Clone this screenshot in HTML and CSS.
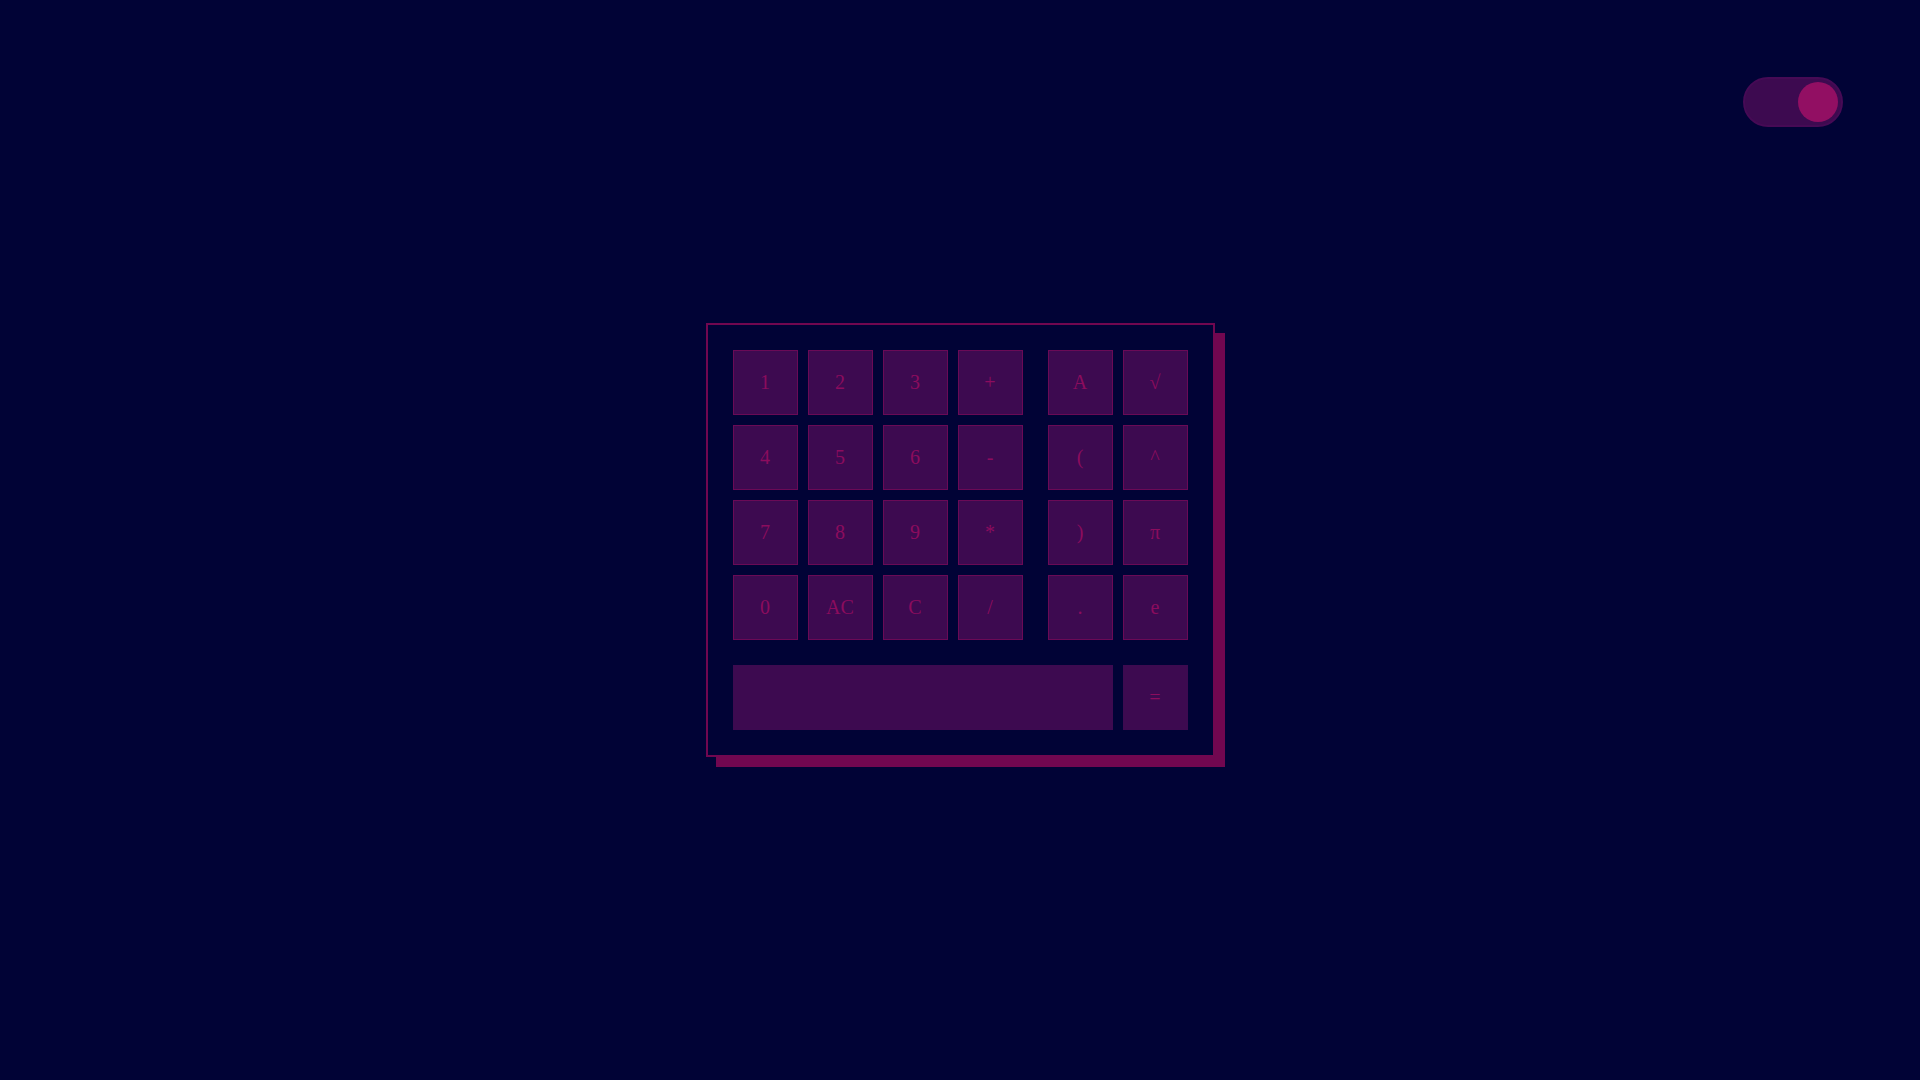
FILE: index.html
```html
<!DOCTYPE html>
<html lang="en">
<head>
  <meta charset="UTF-8">
  <meta name="viewport" content="width=device-width, initial-scale=1.0">
  <title>Calculator</title>

  <!-- Styles -->
  <link rel="stylesheet" href="styles.css">
</head>
<body>
  <div class="page">
    <!-- Theme toggle -->
    <div class="toggle" id="toggle">
      <div class="knob"></div>
    </div>

    <div class="calculator">
      <div class="keys">
        <div class="pad">
          <button class="key">1</button>
          <button class="key">2</button>
          <button class="key">3</button>
          <button class="key">+</button>
          <button class="key">4</button>
          <button class="key">5</button>
          <button class="key">6</button>
          <button class="key">-</button>
          <button class="key">7</button>
          <button class="key">8</button>
          <button class="key">9</button>
          <button class="key">*</button>
          <button class="key">0</button>
          <button class="key">AC</button>
          <button class="key">C</button>
          <button class="key">/</button>
        </div>
        <div class="pad pad-extra">
          <button class="key">A</button>
          <button class="key">&radic;</button>
          <button class="key">(</button>
          <button class="key">^</button>
          <button class="key">)</button>
          <button class="key">&pi;</button>
          <button class="key">.</button>
          <button class="key">e</button>
        </div>
      </div>

      <div class="bottom">
        <input type="text" class="display" id="display" readonly>
        <button class="key key-equals">=</button>
      </div>
    </div>
  </div>
</body>
</html>
```

FILE: styles.css
```css
* {
  box-sizing: border-box;
  margin: 0;
  padding: 0;
  font-family: 'Liberation Serif', serif;
}

body {
  background: #010336;
  min-height: 100vh;
}

.page {
  display: grid;
  min-height: 100vh;
  place-items: center;
}

.page > * {
  grid-area: 1 / 1;
}

/* Theme toggle */
.toggle {
  justify-self: end;
  align-self: start;
  margin: 77px 77px 0 0;
  width: 100px;
  height: 50px;
  border-radius: 25px;
  background: #3d0a50;
  border: 2px solid #460a55;
  padding: 3px;
  display: flex;
  justify-content: flex-end;
}

.knob {
  width: 40px;
  height: 40px;
  border-radius: 50%;
  background: #920f63;
}

/* Calculator */
.calculator {
  border: 2px solid #710750;
  box-shadow: 10px 10px 0 #710750;
  padding: 25px;
  display: flex;
  flex-direction: column;
  gap: 25px;
}

.keys {
  display: flex;
  gap: 25px;
}

.pad {
  display: grid;
  grid-template-columns: repeat(4, 65px);
  grid-auto-rows: 65px;
  gap: 10px;
}

.pad-extra {
  grid-template-columns: repeat(2, 65px);
}

.key {
  background: #3d0a50;
  border: 1px solid #6a0a56;
  color: #8c0c5e;
  font-size: 20px;
  cursor: pointer;
}

.bottom {
  display: flex;
  gap: 10px;
}

.display {
  width: 380px;
  height: 65px;
  background: #3d0a50;
  border: none;
  outline: none;
  color: #8c0c5e;
  font-size: 24px;
  padding: 0 15px;
}

.key-equals {
  width: 65px;
  height: 65px;
  border-color: #3d0a50;
}
```
